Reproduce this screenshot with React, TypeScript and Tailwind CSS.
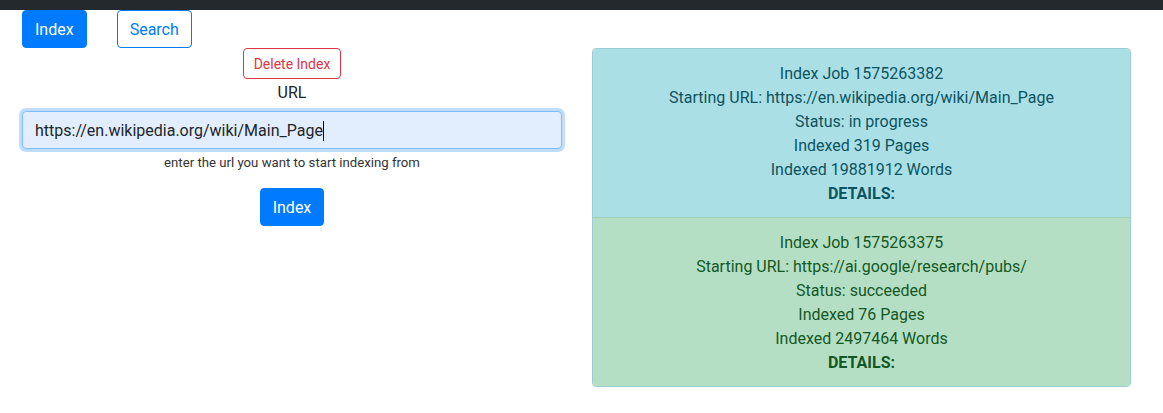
import React from "react";

const jobs = [
  {
    id: "1575263382",
    url: "https://en.wikipedia.org/wiki/Main_Page",
    status: "in progress",
    pages: 319,
    words: 19881912,
    tone: "bg-[#abdfe6] text-[#0c5460] border-[#9ccdd4]",
  },
  {
    id: "1575263375",
    url: "https://ai.google/research/pubs/",
    status: "succeeded",
    pages: 76,
    words: 2497464,
    tone: "bg-[#b4dfc5] text-[#155724] border-[#a3d0b3]",
  },
];

export default function App() {
  return (
    <div className="min-h-[413px] bg-white text-[#212529] font-['Roboto',sans-serif] text-base leading-6">
      <div className="h-[10px] bg-[#24292e]" />
      <div className="flex gap-[30px] pl-[22px]">
        <button className="h-[38px] px-3 pt-px rounded bg-[#007bff] text-white border border-[#007bff]">Index</button>
        <button className="h-[38px] px-3 pt-px rounded bg-white text-[#007bff] border border-[#007bff]">Search</button>
      </div>
      <div className="flex gap-[30px] pl-[22px] pr-[32px]">
        <div className="w-[540px] flex flex-col items-center">
          <button className="h-[31px] px-[9.5px] pt-px rounded text-sm text-[#dc3545] border border-[#dc3545] bg-white">Delete Index</button>
          <label className="pt-px mb-2 h-6 leading-[25px]">URL</label>
          <div className="w-full h-[38px] flex items-center px-3 pt-px rounded border border-[#80bdff] bg-[#e2eefd] shadow-[0_0_0_3px_rgba(0,123,255,0.25)]">
            <span>https://en.wikipedia.org/wiki/Main_Page</span>
            <span className="w-px h-5 bg-black" />
          </div>
          <small className="mt-1 pt-px text-[13.2px] leading-[18px] text-[#333]">enter the url you want to start indexing from</small>
          <button className="mt-4 h-[38px] px-3 pt-px rounded bg-[#007bff] text-white border border-[#007bff]">Index</button>
        </div>
        <div className="w-[539px] flex flex-col rounded border border-[#9ccdd4] overflow-hidden">
          {jobs.map((j, i) => (
            <div key={j.id} className={`px-5 pt-[13px] pb-[11px] text-center ${j.tone} ${i > 0 ? "border-t" : ""}`}>
              <div>Index Job {j.id}</div>
              <div>Starting URL: {j.url}</div>
              <div>Status: {j.status}</div>
              <div>Indexed {j.pages} Pages</div>
              <div>Indexed {j.words} Words</div>
              <div className="font-bold">DETAILS:</div>
            </div>
          ))}
        </div>
      </div>
    </div>
  );
}
